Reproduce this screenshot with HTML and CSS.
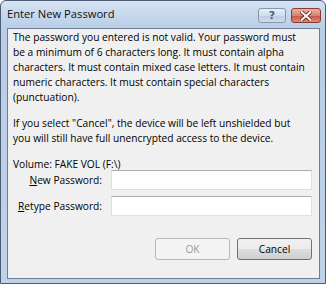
FILE: index.html
```html
<!DOCTYPE html>
<html>
<head>
<meta charset="utf-8">
<link rel="stylesheet" href="styles.css">
</head>
<body>
<div class="window">
  <div class="titlebar">
    <span class="title">Enter New Password</span>
    <div class="caption-buttons">
      <span class="cap-btn help">?</span>
      <span class="cap-btn close">
        <svg width="12" height="10" viewBox="0 0 12 10"><path d="M1.5 1 L10.5 9 M10.5 1 L1.5 9" stroke="#5a1a12" stroke-width="3.6" stroke-linecap="square"/><path d="M1.5 1 L10.5 9 M10.5 1 L1.5 9" stroke="#fff" stroke-width="2" stroke-linecap="square"/></svg>
      </span>
    </div>
  </div>
  <div class="client">
    <p class="msg">The password you entered is not valid. Your password must be a minimum of 6 characters long. It must contain alpha characters. It must contain mixed case letters. It must contain numeric characters. It must contain special characters (punctuation).</p>
    <p class="msg second">If you select "Cancel", the device will be left unshielded but you will still have full unencrypted access to the device.</p>
    <p class="volume">Volume: FAKE VOL (F:\)</p>
    <div class="form">
      <label class="lbl"><u>N</u>ew Password:</label>
      <input class="field" type="password">
      <label class="lbl"><u>R</u>etype Password:</label>
      <input class="field" type="password">
    </div>
    <div class="buttons">
      <button class="btn disabled">OK</button>
      <button class="btn">Cancel</button>
    </div>
  </div>
</div>
</body>
</html>
```
FILE: styles.css
```css
html, body {
  margin: 0;
  padding: 0;
  background: #fff;
}
body {
  font-family: "Open Sans", "Noto Sans", sans-serif;
  font-size: 10.2px;
  color: #000;
}
.window {
  width: 326px;
  height: 284px;
  box-sizing: border-box;
  border: 1px solid #4c5d73;
  border-radius: 6px 6px 0 0;
  background: linear-gradient(#d5e3f3 0px, #c0d3ea 20px, #b9cde6 28px, #bfd2e8 100%);
  display: flex;
  flex-direction: column;
}
.titlebar {
  height: 27px;
  display: flex;
  align-items: flex-start;
  justify-content: space-between;
  padding: 0 4px 0 6px;
}
.title {
  font-size: 11.2px;
  margin-top: 5px;
  color: #111;
}
.caption-buttons {
  display: flex;
  gap: 5px;
  margin-top: 7px;
}
.cap-btn {
  height: 15px;
  box-sizing: border-box;
  border: 1px solid #8796ab;
  border-radius: 3px;
  display: flex;
  align-items: center;
  justify-content: center;
}
.help {
  width: 28px;
  background: linear-gradient(#e8eff8 0%, #d0dcec 50%, #bccde3 51%, #cddcee 100%);
  color: #4d5f78;
  font-family: "DejaVu Sans", sans-serif;
  font-weight: bold;
  font-size: 11px;
}
.close {
  width: 30px;
  border-color: #8a3a30;
  background: linear-gradient(#eab0a4 0%, #d88474 50%, #c65440 51%, #d98a74 100%);
}
.client {
  flex: 1;
  margin: 0 5px 4px 6px;
  border: 1px solid #6b7e96;
  background: #f0f0f0;
  padding: 1px 6px 0 5px;
}
.msg {
  margin: 0;
  line-height: 15px;
  width: 297px;
}
.second {
  margin-top: 11px;
}
.volume {
  margin: 11px 0 0;
  line-height: 15px;
}
.form {
  display: grid;
  grid-template-columns: 89px 201px;
  column-gap: 9px;
  row-gap: 6px;
  align-items: center;
  margin-top: -2px;
}
.lbl {
  text-align: right;
  white-space: nowrap;
}
.field {
  height: 20px;
  box-sizing: border-box;
  margin: 0;
  border: 1px solid #dbdfe6;
  border-top-color: #abadb3;
  background: #fff;
}
.buttons {
  display: flex;
  justify-content: flex-end;
  gap: 7px;
  margin-top: 22px;
  padding-right: 1px;
}
.btn {
  width: 75px;
  height: 22px;
  margin: 0;
  padding: 0;
  font-family: inherit;
  font-size: 10.2px;
  color: #000;
  border: 1px solid #707070;
  border-radius: 3px;
  background: linear-gradient(#f2f2f2 0%, #ebebeb 50%, #dddddd 51%, #cfcfcf 100%);
}
.btn.disabled {
  color: #9a9a9a;
  border-color: #b5b8bb;
  background: #f4f4f4;
}
```
